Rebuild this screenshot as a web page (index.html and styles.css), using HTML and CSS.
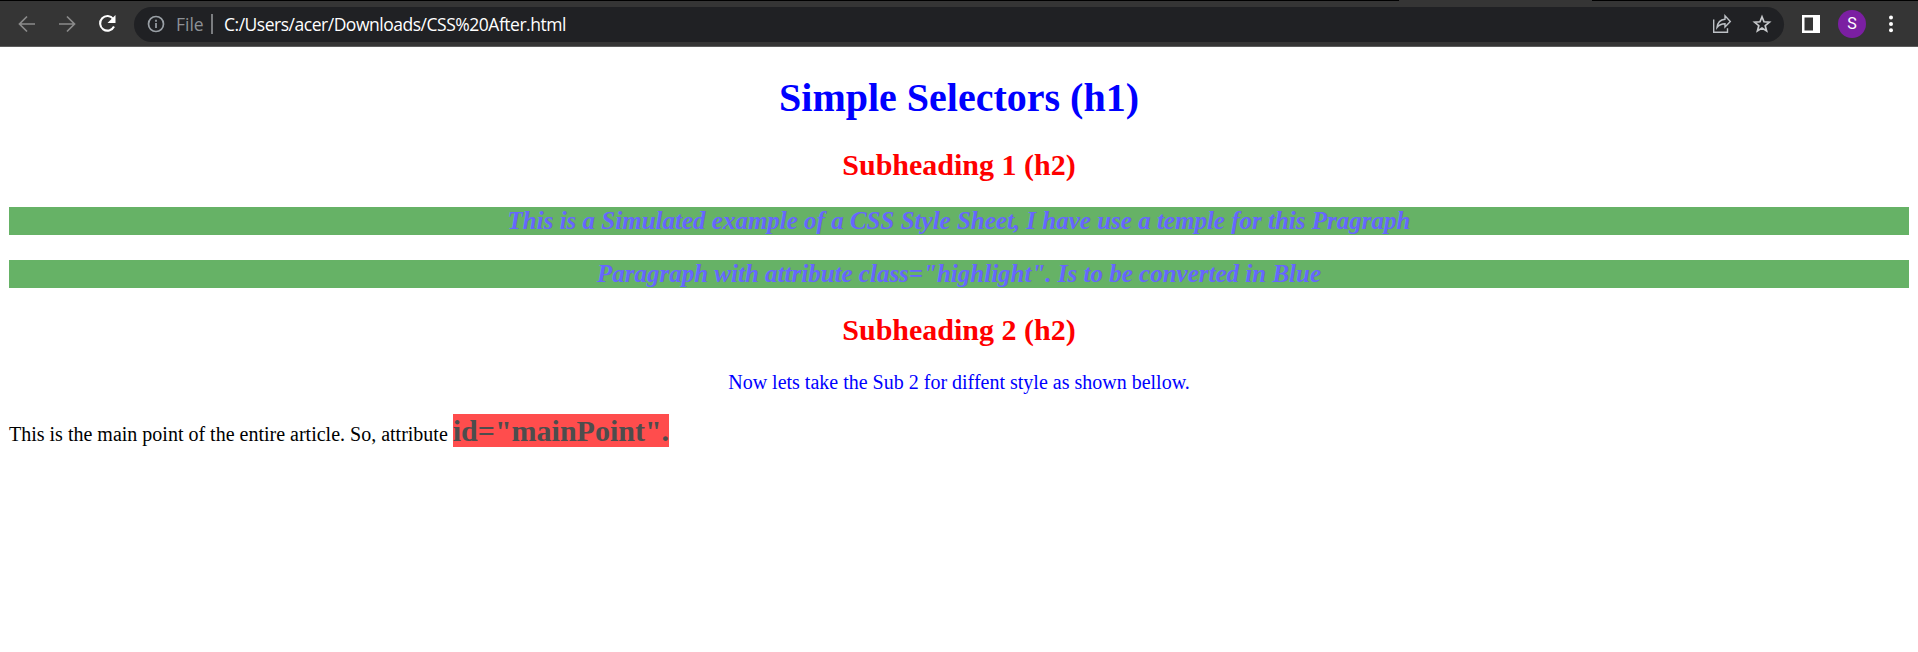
FILE: index.html
```html
<!DOCTYPE html>
<html lang="en">
<head>
<meta charset="utf-8">
<title>CSS After</title>
<link rel="stylesheet" href="styles.css">
</head>
<body>
<header class="toolbar">
  <svg class="icon nav" viewBox="0 0 20 20"><path d="M18 10H3M10 2.500L2.500 10l7.500 7.500"/></svg>
  <svg class="icon nav" viewBox="0 0 20 20"><path d="M2 10h15M10 2.500l7.500 7.500-7.500 7.500"/></svg>
  <svg class="icon nav reload" viewBox="0 0 20 20"><path d="M16.300 5A7.300 7.300 0 1 0 17 12.500"/><path class="solid" d="M18.500 1v8h-8z"/></svg>
  <div class="address">
    <svg class="icon info" viewBox="0 0 20 20"><circle cx="10" cy="10" r="7.500"/><path d="M10 9v5M10 5.700v2"/></svg>
    <span class="scheme">File</span>
    <span class="divider"></span>
    <span class="url">C:/Users/acer/Downloads/CSS%20After.html</span>
    <svg class="icon share" viewBox="0 0 20 20"><path d="M1.700 5.500v12.800h13.800v-4M5 13.500c.6-5.500 3.500-8 8-8.300V1.800l5.300 5.700-5.300 5.500V9.700c-3.500 0-6 1-8 3.800z"/></svg>
    <svg class="icon star" viewBox="0 0 20 20"><path d="M10 2.800l2 5 5.400.4-4.200 3.500 1.400 5.300-4.600-2.900L5.400 17l1.400-5.300L2.600 8.200 8 7.800z"/></svg>
  </div>
  <svg class="icon panel" viewBox="0 0 20 20"><path class="solid" fill-rule="evenodd" d="M1 1h18v18H1zM3.500 3.500v13H12v-13z"/></svg>
  <span class="avatar">S</span>
  <svg class="icon menu" viewBox="0 0 20 20"><circle cx="10" cy="3.500" r="2"/><circle cx="10" cy="10" r="2"/><circle cx="10" cy="16.300" r="2"/></svg>
</header>
<main class="page">
  <h1>Simple Selectors (h1)</h1>
  <h2>Subheading 1 (h2)</h2>
  <p class="highlight">This is a Simulated example of a CSS Style Sheet, I have use a temple for this Pragraph</p>
  <p class="highlight">Paragraph with attribute class="highlight". Is to be converted in Blue</p>
  <h2>Subheading 2 (h2)</h2>
  <p class="note">Now lets take the Sub 2 for diffent style as shown bellow.</p>
  <p class="article">This is the main point of the entire article. So, attribute <span class="main-point">id="mainPoint".</span></p>
</main>
</body>
</html>
```
FILE: styles.css
```css
* { box-sizing: border-box; }
body {
  margin: 0;
  background: #fff;
  font-family: "Liberation Serif", serif;
  font-size: 20px;
}
.toolbar {
  display: flex;
  align-items: center;
  height: 47px;
  padding: 0 17px 0 17px;
  background: #353535;
  border-top: 1px solid;
  border-image: linear-gradient(90deg, #000 1399px, #353535 1399px 1591px, #000 1591px) 1;
  border-bottom: 0;
  box-shadow: inset 0 -1px #5c5c5c;
}
.icon {
  flex: none;
  width: 20px;
  height: 20px;
  fill: none;
  stroke: #8b8b8b;
  stroke-width: 1.7;
}
.nav { margin-right: 20px; }
.reload { margin-right: 17px; stroke: #fff; stroke-width: 2.1; }
.solid { fill: #fff; stroke: none; }
.address {
  display: flex;
  align-items: center;
  width: 1650px;
  height: 35px;
  padding: 0 12px;
  border-radius: 18px;
  background: #202124;
  font: 17.5px/35px "Open Sans", "Noto Sans", sans-serif;
}
.info { stroke: #9aa0a6; stroke-width: 1.7; }
.scheme { width: 35px; margin-left: 10px; color: #8d9196; }
.divider { width: 2px; height: 20px; background: #7b7d80; }
.url { margin-left: 11px; color: #fff; letter-spacing: -0.48px; }
.share { margin-left: auto; stroke: #bdc1c6; stroke-width: 1.4; }
.star { margin-left: 20px; stroke: #c7c9cc; stroke-width: 1.7; }
.panel { margin-left: 17px; }
.avatar {
  width: 28px;
  height: 28px;
  margin-left: 17px;
  border-radius: 50%;
  background: #7b1fa2;
  color: #fff;
  font: 16px/28px Roboto, sans-serif;
  text-align: center;
}
.menu { margin-left: 15px; fill: #fff; stroke: none; }
.page { display: flow-root; padding: 0 9px; }
h1, h2, .highlight, .note { text-align: center; }
h1 { margin: 28px 0 27px; font-size: 40px; line-height: 46px; color: #00f; }
h2 { margin: 25px 0; font-size: 30px; line-height: 34px; color: #f00; }
.highlight {
  margin: 25px 0;
  background: #66b266;
  color: #66f;
  font-size: 25px;
  font-style: italic;
  font-weight: bold;
  line-height: 28px;
}
.note { margin: -1px 0 20px; line-height: 23px; color: #00f; }
.article { margin: 20px 0; line-height: 33px; color: #000; }
.main-point {
  background: #ff4d4d;
  color: #4d4d4d;
  font-size: 30px;
  font-weight: bold;
}
```
